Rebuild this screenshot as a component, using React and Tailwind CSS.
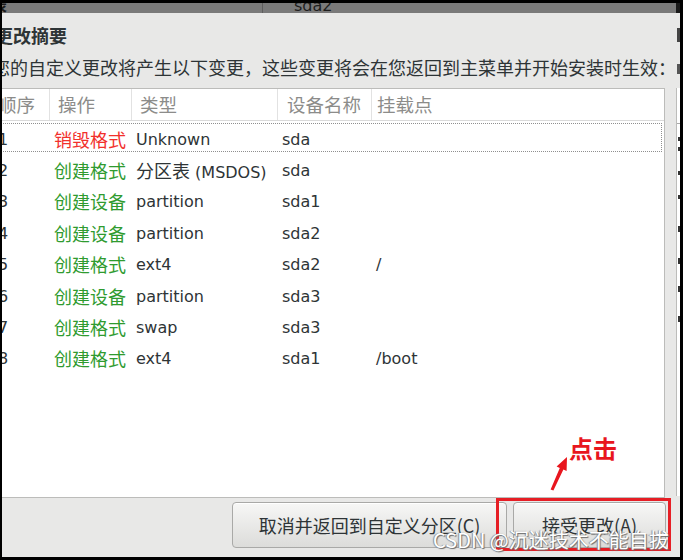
import React from "react";

const LAT = { fontFamily: '"DejaVu Sans","Noto Sans CJK SC",sans-serif' };
const CJK = { fontFamily: '"Noto Sans CJK SC","DejaVu Sans",sans-serif' };

const RED = "text-[#f2302c]";
const GREEN = "text-[#2f9b2f]";

const rows = [
  { n: "1", act: "销毁格式", red: true, type: <span>Unknown</span>, dev: "sda", mnt: "" },
  {
    n: "2",
    act: "创建格式",
    type: (
      <span>
        <span className="text-[18px]" style={CJK}>分区表</span> (MSDOS)
      </span>
    ),
    dev: "sda",
    mnt: "",
  },
  { n: "3", act: "创建设备", type: <span>partition</span>, dev: "sda1", mnt: "" },
  { n: "4", act: "创建设备", type: <span>partition</span>, dev: "sda2", mnt: "" },
  { n: "5", act: "创建格式", type: <span>ext4</span>, dev: "sda2", mnt: "/" },
  { n: "6", act: "创建设备", type: <span>partition</span>, dev: "sda3", mnt: "" },
  { n: "7", act: "创建格式", type: <span>swap</span>, dev: "sda3", mnt: "" },
  { n: "8", act: "创建格式", type: <span>ext4</span>, dev: "sda1", mnt: "/boot" },
];

const COLS = "grid grid-cols-[47px_82px_146px_94px_1fr]";

function Header() {
  const cell = "flex items-center h-full border-l border-[#e2e2e2] whitespace-nowrap";
  return (
    <div
      className={`${COLS} h-[32px] border-b border-[#dadada] text-[18.5px] text-[#8c8c8a]`}
      style={CJK}
    >
      <div className="flex items-center h-full whitespace-nowrap -ml-[4px]">顺序</div>
      <div className={`${cell} pl-[8px]`}>操作</div>
      <div className={`${cell} pl-[8px]`}>类型</div>
      <div className={`${cell} pl-[9px]`}>设备名称</div>
      <div className={`${cell} pl-[5px]`}>挂载点</div>
    </div>
  );
}

function Row({ r, focus }) {
  return (
    <div
      className={`${COLS} relative h-[31.4px] items-center text-[16px] text-[#2e3436] whitespace-nowrap`}
      style={LAT}
    >
      {focus && (
        <div className="absolute -left-[3px] right-[2px] top-[0px] bottom-[2px] border border-dotted border-[#8f8f8f]" />
      )}
      <div className="-ml-[4px] pt-[2px]">{r.n}</div>
      <div className={`pl-[5px] pt-[1px] text-[18px] ${r.red ? RED : GREEN}`} style={CJK}>
        {r.act}
      </div>
      <div className="pl-[5px] pt-[2px]">{r.type}</div>
      <div className="pl-[5px] pt-[2px]">{r.dev}</div>
      <div className="pl-[5px] pt-[2px]">{r.mnt}</div>
    </div>
  );
}

function Button({ w, children }) {
  return (
    <div
      className={`${w} h-[46px] flex items-center justify-center rounded-[4px] border border-[#a9a9a7] bg-linear-to-b from-[#f7f7f6] to-[#dcdcda] text-[18px] text-[#2e3436] shadow-[inset_0_1px_0_#ffffff]`}
      style={CJK}
    >
      {children}
    </div>
  );
}

export default function App() {
  return (
    <div className="relative w-[683px] h-[560px] overflow-hidden bg-black pt-[3px] pl-[2px] pr-[3px] pb-[3px] flex">
      <div className="flex-1 flex flex-col">
        {/* top bar (window behind) */}
        <div className="h-[10px] flex">
          <div className="w-[674px] h-full bg-[#7a7a7a] flex items-start overflow-hidden" style={LAT}>
            <div className="w-[260px] h-full overflow-hidden">
              <span className="block -ml-[11px] -mt-[7px] leading-[16px] text-[16px] font-bold text-[#1c1c1c]" style={CJK}>
                表
              </span>
            </div>
            <div className="w-px h-full bg-[#5e5e5e]" />
            <div className="pl-[31px] -mt-[5px] leading-[16px] text-[16px] text-[#1e1e1e]">sda2</div>
          </div>
          <div className="w-[4px] h-full bg-[#1a1a1a]" />
        </div>

        <div className="flex-1 flex">
          {/* dialog */}
          <div className="w-[674px] h-full bg-[#e8e8e7] flex flex-col overflow-hidden">
            <div
              className="pt-[10px] h-[34px] leading-[24px] text-[18px] font-bold text-[#2e3436] -ml-[7px] whitespace-nowrap"
              style={CJK}
            >
              更改摘要
            </div>
            <div
              className="mt-[8px] h-[24px] leading-[24px] text-[18px] text-[#2e3436] -ml-[10px] whitespace-nowrap"
              style={CJK}
            >
              您的自定义更改将产生以下变更，这些变更将会在您返回到主菜单并开始安装时生效：
            </div>

            {/* table */}
            <div className="mt-[9px] w-[663px] h-[410px] bg-white border-t border-b border-r border-[#bcbcba] flex flex-col">
              <Header />
              <div className="pt-[2px] flex flex-col">
                {rows.map((r, i) => (
                  <Row key={r.n} r={r} focus={i === 0} />
                ))}
              </div>
            </div>

            {/* footer */}
            <div className="flex-1 flex justify-end items-start pt-[4px] pr-[10px] gap-[6px]">
              <Button w="w-[275px]">取消并返回到自定义分区(C)</Button>
              <Button w="w-[153px]">接受更改(A)</Button>
            </div>
          </div>

          {/* right strip: neighbouring window */}
          <div className="w-[4px] h-full bg-[#e8e8e7] flex flex-col">
            <div className="h-[75px] flex flex-col">
              <div className="mt-[15px] ml-[1px] w-[3px] h-[14px] bg-[#444]" />
              <div className="mt-[22px] ml-[1px] w-[3px] h-[10px] bg-[#555]" />
            </div>
            <div className="h-[408px] border-l border-[#bcbcba] bg-white flex flex-col">
              <div className="mt-[35px] h-px bg-[#aaa]" />
              <div className="mt-[13px] ml-[1px] w-[2px] h-[4px] bg-[#333]" />
              <div className="mt-[6px] ml-[1px] w-[2px] h-[4px] bg-[#333]" />
              <div className="mt-[20px] ml-[1px] w-[2px] h-[4px] bg-[#333]" />
              <div className="mt-[20px] ml-[1px] w-[2px] h-[4px] bg-[#333]" />
              <div className="mt-[27px] ml-[1px] w-[2px] h-[6px] bg-[#333]" />
              <div className="mt-[26px] ml-[1px] w-[2px] h-[6px] bg-[#333]" />
              <div className="mt-[22px] ml-[1px] w-[2px] h-[6px] bg-[#333]" />
              <div className="mt-[24px] ml-[1px] w-[2px] h-[6px] bg-[#333]" />
            </div>
          </div>
        </div>
      </div>

      {/* annotations */}
      <div
        className="absolute left-[569px] top-[436px] text-[24px] leading-none font-bold text-[#e8161e] [text-shadow:0_0_2px_#ffffff,1px_1px_1px_#ffffff]"
        style={CJK}
      >
        点击
      </div>
      <svg className="absolute left-[545px] top-[452px]" width="30" height="42" viewBox="0 0 30 42">
        <polygon
          points="22,5 21.6,19.1 18.4,17.6 8.4,38.6 5.6,37.4 14.8,16 11.6,14.5"
          fill="#e8161e"
        />
      </svg>
      <div className="absolute left-[496px] top-[498px] w-[175px] h-[53px] border-[3px] border-[#e61e25]" />
      <div
        className="absolute left-[433px] top-[530px] text-[20px] leading-none text-white whitespace-nowrap [text-shadow:1px_1px_1px_#6b6b6b,-1px_0_1px_#8a8a8a]"
        style={CJK}
      >
        CSDN @沉迷技术不能自拔
      </div>
    </div>
  );
}
